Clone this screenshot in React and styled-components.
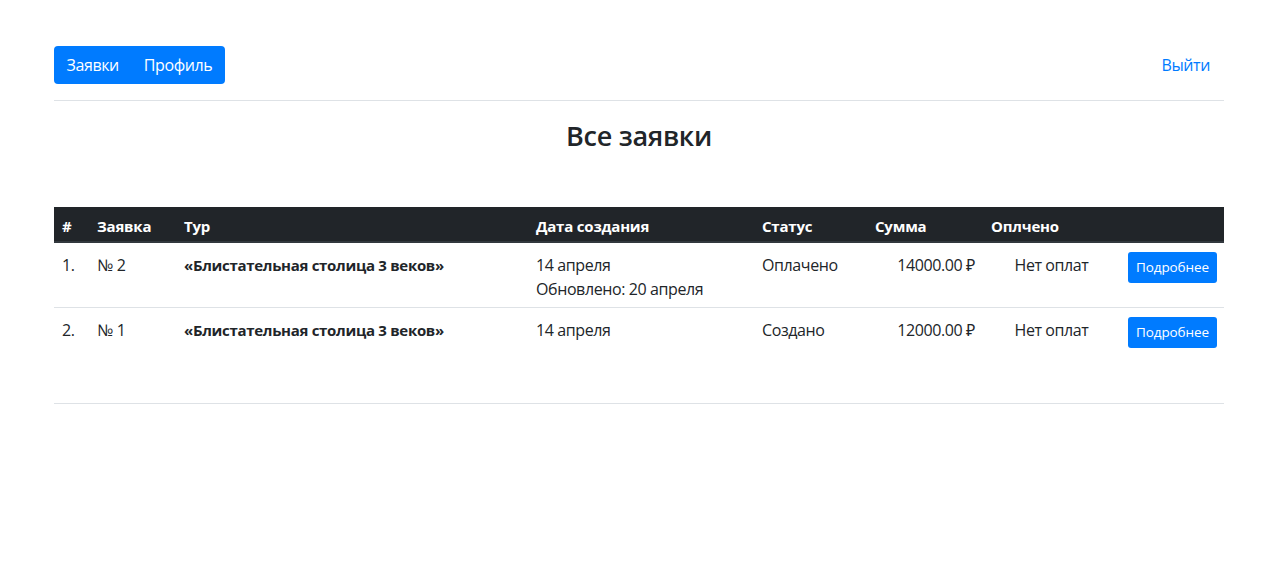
import React from 'react';
import styled, { createGlobalStyle } from 'styled-components';

const primary = '#007bff';
const text = '#212529';
const line = '#dee2e6';

const GlobalStyle = createGlobalStyle`
  html, body {
    margin: 0;
    padding: 0;
    background: #fff;
  }
  body {
    font-family: "Open Sans", "Noto Sans", "Liberation Sans", sans-serif;
    font-size: 16px;
    line-height: 1.5;
    letter-spacing: -0.4px;
    color: ${text};
  }
  * { box-sizing: border-box; }
`;

const Container = styled.div`
  width: 1170px;
  margin-left: 54px;
  padding-top: 46px;
`;

const Navbar = styled.nav`
  display: flex;
  align-items: center;
  justify-content: space-between;
`;

const Pills = styled.div`
  display: flex;
  background: ${primary};
  border-radius: 4px;
`;

const PillLink = styled.a`
  color: #fff;
  padding: 7px 12.5px;
  text-decoration: none;
  line-height: 24px;
`;

const LogoutLink = styled.a`
  color: ${primary};
  text-decoration: none;
  padding: 7px 14px;
  line-height: 24px;
`;

const Divider = styled.hr`
  border: 0;
  border-top: 1px solid ${line};
  margin: ${(p) => p.$margin || '16px 0'};
`;

const Title = styled.h2`
  text-align: center;
  font-size: 27px;
  font-weight: 600;
  letter-spacing: -0.3px;
  line-height: 1.2;
  margin: 19px 0 55px;
`;

const Table = styled.table`
  width: 100%;
  border-collapse: collapse;
  table-layout: fixed;
`;

const Th = styled.th`
  background: #212529;
  color: #fff;
  font-weight: 700;
  font-size: 15px;
  letter-spacing: -0.2px;
  text-align: left;
  padding: 7px 8px 3px;
  line-height: 24px;
  border-bottom: 2px solid #32383e;
`;

const Td = styled.td`
  padding: 10px 8px 6px;
  vertical-align: top;
  text-align: ${(p) => p.$align || 'left'};
  font-weight: ${(p) => (p.$bold ? 700 : 400)};
  font-size: ${(p) => (p.$bold ? '15px' : '16px')};
  letter-spacing: ${(p) => (p.$bold ? '-0.3px' : '-0.4px')};
  line-height: 24px;
`;

const Row = styled.tr`
  & + & td {
    border-top: 1px solid ${line};
  }
`;

const Button = styled.button`
  display: block;
  margin-top: -1px;
  background: ${primary};
  color: #fff;
  border: 0;
  border-radius: 3px;
  padding: 5px 8px;
  font-family: inherit;
  font-size: 13.5px;
  letter-spacing: -0.1px;
  line-height: 21px;
  cursor: pointer;
`;

const orders = [
  {
    n: 1,
    id: 2,
    tour: '«Блистательная столица 3 веков»',
    created: '14 апреля',
    updated: 'Обновлено: 20 апреля',
    status: 'Оплачено',
    sum: '14000.00 ₽',
  },
  {
    n: 2,
    id: 1,
    tour: '«Блистательная столица 3 веков»',
    created: '14 апреля',
    status: 'Создано',
    sum: '12000.00 ₽',
  },
];

export default function App() {
  return (
    <>
      <GlobalStyle />
      <Container>
        <Navbar>
          <Pills>
            <PillLink href="#">Заявки</PillLink>
            <PillLink href="#">Профиль</PillLink>
          </Pills>
          <LogoutLink href="#">Выйти</LogoutLink>
        </Navbar>
        <Divider $margin="16px 0 0" />
        <Title>Все заявки</Title>
        <Table>
          <colgroup>
            <col style={{ width: 35 }} />
            <col style={{ width: 87 }} />
            <col style={{ width: 352 }} />
            <col style={{ width: 226 }} />
            <col style={{ width: 113 }} />
            <col style={{ width: 116 }} />
            <col style={{ width: 137 }} />
            <col style={{ width: 104 }} />
          </colgroup>
          <thead>
            <tr>
              <Th>#</Th>
              <Th>Заявка</Th>
              <Th>Тур</Th>
              <Th>Дата создания</Th>
              <Th>Статус</Th>
              <Th>Сумма</Th>
              <Th>Оплчено</Th>
              <Th />
            </tr>
          </thead>
          <tbody>
            {orders.map((o) => (
              <Row key={o.n}>
                <Td>{o.n}.</Td>
                <Td>№ {o.id}</Td>
                <Td $bold>{o.tour}</Td>
                <Td>
                  {o.created}
                  {o.updated && <br />}
                  {o.updated}
                </Td>
                <Td>{o.status}</Td>
                <Td $align="right">{o.sum}</Td>
                <Td $align="center">Нет оплат</Td>
                <Td>
                  <Button>Подробнее</Button>
                </Td>
              </Row>
            ))}
          </tbody>
        </Table>
        <Divider $margin="49px 0 0" />
      </Container>
    </>
  );
}
